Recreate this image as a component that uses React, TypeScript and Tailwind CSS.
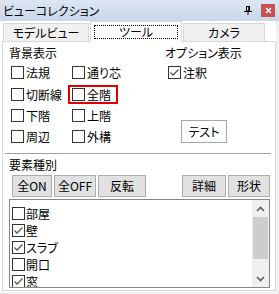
import React from "react"

function CheckBox({ checked }: { checked?: boolean }) {
  return (
    <span className="flex h-[13px] w-[13px] shrink-0 items-center justify-center border border-[#333333] bg-white">
      {checked && (
        <svg width="11" height="11" viewBox="0 0 11 11">
          <path d="M1.5 5.5 L4 8 L9.5 2.5" fill="none" stroke="#555555" strokeWidth="1.3" />
        </svg>
      )}
    </span>
  )
}

function Option({ label, checked, marked }: { label: string; checked?: boolean; marked?: boolean }) {
  return (
    <div
      className={`flex h-[19px] w-fit items-center gap-[2px] whitespace-nowrap border-2 pl-[2px] pr-[5px] ${
        marked ? "border-[#e00000]" : "border-transparent"
      }`}
    >
      <CheckBox checked={checked} />
      <span className="leading-[15px]">{label}</span>
    </div>
  )
}

function Btn({ label, w }: { label: string; w: string }) {
  return (
    <div
      className={`flex h-[22px] items-center justify-center whitespace-nowrap border border-[#adadad] bg-[#e1e1e1] ${w}`}
    >
      {label}
    </div>
  )
}

const backgroundOpts = [
  ["法規", "通り芯"],
  ["切断線", "全階"],
  ["下階", "上階"],
  ["周辺", "外構"],
]

const elements = [
  { label: "部屋", checked: false },
  { label: "壁", checked: true },
  { label: "スラブ", checked: true },
  { label: "開口", checked: false },
  { label: "窓", checked: true },
]

export default function App() {
  return (
    <div className="h-[294px] w-[279px] overflow-hidden bg-[#f0f0f0] text-[12px] text-black font-['Noto_Sans_CJK_JP','Noto_Sans',sans-serif] [font-feature-settings:'palt']">
      {/* title bar */}
      <div className="flex h-[21px] items-center bg-linear-to-b from-[#dce6f3] to-[#c8d7ea] pl-[3px] pr-[4px]">
        <span className="leading-[16px]">ビューコレクション</span>
        <svg className="ml-auto mr-[9px]" width="8" height="9" viewBox="0 0 8 9">
          <path d="M2.5 0.5 H5.5 V5 H2.5 Z" fill="none" stroke="#000" strokeWidth="1" />
          <path d="M5 0.5 V5" stroke="#000" strokeWidth="1.5" />
          <path d="M0 5.5 H8" stroke="#000" strokeWidth="1" />
          <path d="M4 5.5 V9" stroke="#000" strokeWidth="1" />
        </svg>
        <div className="flex h-[13px] w-[14px] items-center justify-center bg-[#c75050]">
          <svg width="7" height="7" viewBox="0 0 7 7">
            <path d="M1 1 L6 6 M6 1 L1 6" stroke="#fff" strokeWidth="1.6" />
          </svg>
        </div>
      </div>

      {/* client area */}
      <div className="h-[271px] w-[276px] bg-white">
        {/* tabs */}
        <div className="flex h-[20px] items-end pl-[3px]">
          <div className="flex h-[18px] w-[86px] items-center justify-center border border-b-0 border-[#d9d9d9] bg-[#f0f0f0]">
            モデルビュー
          </div>
          <div className="relative z-10 -mb-px ml-px flex h-[21px] w-[92px] border border-b-0 border-[#d9d9d9] bg-white p-[3px]">
            <div className="flex flex-1 items-center justify-center border border-dotted border-black">ツール</div>
          </div>
          <div className="ml-px flex h-[18px] w-[82px] items-center justify-center border border-b-0 border-[#d9d9d9] bg-[#f0f0f0]">
            カメラ
          </div>
        </div>

        {/* panel */}
        <div className="ml-[2px] flex h-[250px] w-[274px] flex-col border border-[#d9d9d9] bg-white">
          <div className="flex h-[106px] pt-[3px]">
            <div className="w-[161px] pl-[4px]">
              <div className="h-[16px] pl-[2px] leading-[16px]">背景表示</div>
              <div className="grid grid-cols-[61px_auto] grid-rows-[22px_22px_21px_21px] items-center">
                {backgroundOpts.map(([a, b]) => (
                  <React.Fragment key={a}>
                    <Option label={a} />
                    <Option label={b} marked={b === "全階"} />
                  </React.Fragment>
                ))}
              </div>
            </div>
            <div className="flex flex-col">
              <div className="h-[16px] pl-px leading-[16px]">オプション表示</div>
              <div className="flex h-[22px] items-center">
                <Option label="注釈" checked />
              </div>
              <div className="ml-[17px] mt-[37px] flex h-[23px] w-[46px] items-center justify-center border border-[#a8a8a8] bg-[#fdfdfd]">
                テスト
              </div>
            </div>
          </div>

          <div className="ml-[2px] mt-[5px] h-px w-[266px] bg-[#a0a0a0]" />

          <div className="mt-[3px] h-[16px] pl-[6px] leading-[16px]">要素種別</div>

          <div className="mt-[2px] flex items-center pl-[9px]">
            <Btn label="全ON" w="w-[40px]" />
            <Btn label="全OFF" w="ml-[2px] w-[42px]" />
            <Btn label="反転" w="ml-[2px] w-[48px]" />
            <Btn label="詳細" w="ml-[36px] w-[44px]" />
            <Btn label="形状" w="ml-[2px] w-[42px]" />
          </div>

          {/* list */}
          <div className="ml-[6px] mt-[2px] flex h-[89px] w-[261px] overflow-hidden border border-[#828790] bg-white">
            <div className="flex-1 pl-[2px] pt-[5px]">
              {elements.map((el) => (
                <div key={el.label} className="flex h-[17px] items-center gap-px">
                  <CheckBox checked={el.checked} />
                  <span className="leading-[15px]">{el.label}</span>
                </div>
              ))}
            </div>
            <div className="flex w-[17px] flex-col bg-[#f0f0f0]">
              <div className="flex h-[17px] items-center justify-center">
                <svg width="9" height="6" viewBox="0 0 9 6">
                  <path d="M1 5 L4.5 1.5 L8 5" fill="none" stroke="#606060" strokeWidth="1.6" />
                </svg>
              </div>
              <div className="mx-px h-[42px] bg-[#cdcdcd]" />
              <div className="flex-1" />
              <div className="flex h-[17px] items-center justify-center">
                <svg width="9" height="6" viewBox="0 0 9 6">
                  <path d="M1 1 L4.5 4.5 L8 1" fill="none" stroke="#606060" strokeWidth="1.6" />
                </svg>
              </div>
            </div>
          </div>
        </div>
      </div>
    </div>
  )
}
